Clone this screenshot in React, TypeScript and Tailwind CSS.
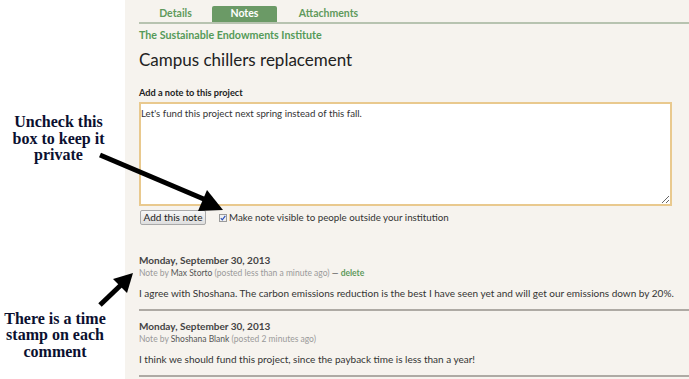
import React from "react";

type Note = {
  date: string;
  author: string;
  posted: string;
  canDelete: boolean;
  body: string;
};

const notes: Note[] = [
  {
    date: "Monday, September 30, 2013",
    author: "Max Storto",
    posted: "posted less than a minute ago",
    canDelete: true,
    body: "I agree with Shoshana. The carbon emissions reduction is the best I have seen yet and will get our emissions down by 20%.",
  },
  {
    date: "Monday, September 30, 2013",
    author: "Shoshana Blank",
    posted: "posted 2 minutes ago",
    canDelete: false,
    body: "I think we should fund this project, since the payback time is less than a year!",
  },
];

const tabs = [
  { label: "Details", width: "w-[73px]" },
  { label: "Notes", width: "w-[65px]" },
  { label: "Attachments", width: "w-[103px]" },
];

// Callout arrows drawn over the screenshot
const Arrows: React.FC = () => (
  <svg
    className="absolute inset-0 pointer-events-none"
    width={689}
    height={379}
    viewBox="0 0 689 379"
  >
    <line x1={100} y1={155} x2={206} y2={200} stroke="#000" strokeWidth={5} />
    <polygon points="223,210 198,211 207,190" fill="#000" />
    <line x1={100} y1={305} x2={122} y2={284} stroke="#000" strokeWidth={5} />
    <polygon points="133,273 127,293 113,279" fill="#000" />
  </svg>
);

export default function App() {
  return (
    <div className="relative w-[689px] h-[379px] overflow-hidden flex bg-white font-['Lato','Liberation_Sans',sans-serif]">
      {/* annotation column */}
      <div className="w-[125px] shrink-0 flex flex-col font-['Liberation_Serif',serif] font-bold text-[16px] leading-[16.5px] text-[#0b1030] text-center">
        <div className="mt-[114px] pr-[8px]">
          Uncheck this
          <br />
          box to keep it
          <br />
          private
        </div>
        <div className="mt-[147px] pr-[15px]">
          There is a time
          <br />
          stamp on each
          <br />
          comment
        </div>
      </div>

      {/* main panel */}
      <div className="flex-1 bg-[#f6f3ee] pl-[14px] pt-[6px] flex flex-col">
        <div className="flex h-[16px]">
          {tabs.map((t) => (
            <div
              key={t.label}
              className={`${t.width} flex items-center justify-center text-[10.5px] font-bold rounded-t-[2px] ${
                t.label === "Notes" ? "bg-[#6b9a66] text-white" : "text-[#5f9a5c]"
              }`}
            >
              {t.label}
            </div>
          ))}
        </div>
        <div className="h-[2px] bg-[#b7c3b0]" />

        <div className="mt-[4px] h-[14px] leading-[14px] text-[10.7px] font-bold text-[#549a58]">
          The Sustainable Endowments Institute
        </div>
        <h1 className="mt-[6px] h-[24px] leading-[24px] text-[17px] text-[#222]">
          Campus chillers replacement
        </h1>

        <div className="mt-[14px] h-[14px] leading-[14px] text-[9.2px] font-bold text-[#222]">
          Add a note to this project
        </div>
        <textarea
          className="mt-[2px] w-[533px] h-[104px] resize-y border-2 border-[#e9c98e] bg-white px-0 pt-[2px] text-[9.7px] leading-[14px] text-[#333] outline-none"
          defaultValue="Let's fund this project next spring instead of this fall."
        />

        <div className="mt-[4px] h-[15px] flex items-center">
          <button className="ml-[1px] w-[66px] h-[15px] border border-[#a9a9a9] rounded-[2px] bg-gradient-to-b from-[#f7f7f7] to-[#dedede] text-[10px] leading-[13px] text-[#222]">
            Add this note
          </button>
          <label className="ml-[13px] flex items-center text-[9.75px] text-[#333]">
            <span className="w-[8px] h-[8px] mr-[2px] border border-[#9a9a9a] bg-[#f0f0f0] flex items-center justify-center">
              <svg width="6" height="6" viewBox="0 0 6 6">
                <path d="M0.8 3.2 L2.3 4.8 L5.3 0.8" stroke="#2a4fb8" strokeWidth="1.2" fill="none" />
              </svg>
            </span>
            Make note visible to people outside your institution
          </label>
        </div>

        <div className="mt-[29px] flex flex-col">
          {notes.map((n, i) => (
            <div key={i} className={i > 0 ? "mt-[9px]" : ""}>
              <div className="h-[13px] leading-[13px] text-[10px] font-bold text-[#444]">
                {n.date}
              </div>
              <div className="h-[12px] leading-[12px] text-[8.5px] text-[#9a9a9a]">
                Note by <span className="text-[#555]">{n.author}</span> ({n.posted})
                {n.canDelete && (
                  <>
                    {" "}
                    <span className="text-[#555]">—</span>{" "}
                    <span className="font-bold text-[#5f9a5c]">delete</span>
                  </>
                )}
              </div>
              <div className="mt-[7px] h-[14px] leading-[14px] text-[10px] text-[#333] whitespace-nowrap">
                {n.body}
              </div>
              <div className="mt-[9px] h-[2px] bg-[#aeaaa4]" />
            </div>
          ))}
        </div>
      </div>

      <Arrows />
    </div>
  );
}
